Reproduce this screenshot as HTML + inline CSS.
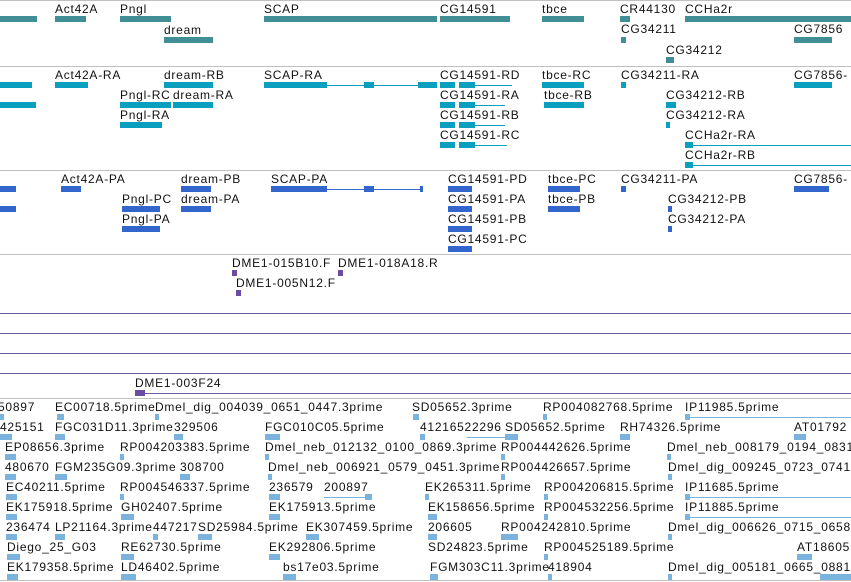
<!DOCTYPE html>
<html><head><meta charset="utf-8"><style>
body{margin:0;width:851px;height:582px;overflow:hidden;background:#fff;position:relative;font-family:"Liberation Sans",sans-serif}
.t{position:absolute;font-size:12px;line-height:14px;color:#111;white-space:nowrap;letter-spacing:0.75px}
.b{position:absolute;height:6px}
.l{position:absolute;height:1px}
.g{background:#418f94}.r{background:#0a9fbf}.p{background:#3366cc}.v{background:#6a4ca0}.c{background:#7ab3dd}
.h{position:absolute;left:0;width:851px;height:1px;background:#c0c0c0}
.pl{position:absolute;left:0;width:851px;height:1px;background:#6a5a9e}
</style></head><body>
<div class="h" style="top:0"></div>
<div class="h" style="top:66px"></div>
<div class="h" style="top:170px"></div>
<div class="h" style="top:254px"></div>
<div class="h" style="top:398px"></div>
<div class="h" style="top:580px"></div>
<div class="pl" style="top:313px"></div>
<div class="pl" style="top:333px"></div>
<div class="pl" style="top:353px"></div>
<div class="pl" style="top:373px"></div>

<!-- genes -->
<div class="b g" style="left:0;top:16px;width:37px"></div>
<div class="t" style="left:55px;top:2px">Act42A</div><div class="b g" style="left:55px;top:16px;width:31px"></div>
<div class="t" style="left:120px;top:2px">Pngl</div><div class="b g" style="left:120px;top:16px;width:51px"></div>
<div class="t" style="left:164px;top:23px">dream</div><div class="b g" style="left:164px;top:37px;width:49px"></div>
<div class="t" style="left:264px;top:2px">SCAP</div><div class="b g" style="left:264px;top:16px;width:173px"></div>
<div class="t" style="left:440px;top:2px">CG14591</div><div class="b g" style="left:440px;top:16px;width:70px"></div>
<div class="t" style="left:542px;top:2px">tbce</div><div class="b g" style="left:542px;top:16px;width:42px"></div>
<div class="t" style="left:620px;top:2px">CR44130</div><div class="b g" style="left:620px;top:16px;width:10px"></div>
<div class="t" style="left:685px;top:2px">CCHa2r</div><div class="b g" style="left:685px;top:16px;width:166px"></div>
<div class="t" style="left:621px;top:22px">CG34211</div><div class="b g" style="left:621px;top:37px;width:5px"></div>
<div class="t" style="left:794px;top:22px">CG7856</div><div class="b g" style="left:794px;top:37px;width:38px"></div>
<div class="t" style="left:666px;top:43px">CG34212</div><div class="b g" style="left:666px;top:57px;width:8px"></div>

<!-- transcripts -->
<div class="b r" style="left:0;top:82px;width:32px"></div>
<div class="b r" style="left:0;top:102px;width:36px"></div>
<div class="t" style="left:55px;top:68px">Act42A-RA</div><div class="b r" style="left:55px;top:82px;width:33px"></div>
<div class="t" style="left:164px;top:68px">dream-RB</div><div class="b r" style="left:164px;top:82px;width:49px"></div>
<div class="t" style="left:264px;top:68px">SCAP-RA</div><div class="b r" style="left:264px;top:82px;width:63px"></div><div class="l r" style="left:327px;top:85px;width:110px"></div><div class="b r" style="left:364px;top:82px;width:10px"></div><div class="b r" style="left:418px;top:82px;width:19px"></div>
<div class="t" style="left:120px;top:88px">Pngl-RC</div><div class="b r" style="left:120px;top:102px;width:51px"></div>
<div class="t" style="left:173px;top:88px">dream-RA</div><div class="b r" style="left:173px;top:102px;width:40px"></div>
<div class="t" style="left:120px;top:108px">Pngl-RA</div><div class="b r" style="left:120px;top:122px;width:42px"></div>
<div class="t" style="left:440px;top:68px">CG14591-RD</div><div class="b r" style="left:440px;top:82px;width:15px"></div><div class="b r" style="left:459px;top:82px;width:16px"></div><div class="l r" style="left:475px;top:85px;width:37px"></div>
<div class="t" style="left:440px;top:88px">CG14591-RA</div><div class="b r" style="left:440px;top:102px;width:15px"></div><div class="b r" style="left:459px;top:102px;width:16px"></div><div class="l r" style="left:475px;top:105px;width:30px"></div>
<div class="t" style="left:440px;top:108px">CG14591-RB</div><div class="b r" style="left:440px;top:122px;width:15px"></div><div class="b r" style="left:459px;top:122px;width:16px"></div><div class="l r" style="left:475px;top:125px;width:30px"></div>
<div class="t" style="left:440px;top:128px">CG14591-RC</div><div class="b r" style="left:440px;top:142px;width:15px"></div><div class="b r" style="left:459px;top:142px;width:16px"></div><div class="l r" style="left:475px;top:145px;width:32px"></div>
<div class="t" style="left:542px;top:68px">tbce-RC</div><div class="b r" style="left:542px;top:82px;width:42px"></div>
<div class="t" style="left:544px;top:88px">tbce-RB</div><div class="b r" style="left:544px;top:102px;width:40px"></div>
<div class="t" style="left:621px;top:68px">CG34211-RA</div><div class="b r" style="left:621px;top:82px;width:5px"></div>
<div class="t" style="left:794px;top:68px">CG7856-</div><div class="b r" style="left:794px;top:82px;width:38px"></div>
<div class="t" style="left:666px;top:88px">CG34212-RB</div><div class="b r" style="left:666px;top:102px;width:10px"></div>
<div class="t" style="left:666px;top:108px">CG34212-RA</div><div class="b r" style="left:666px;top:122px;width:4px"></div>
<div class="t" style="left:685px;top:128px">CCHa2r-RA</div><div class="b r" style="left:685px;top:142px;width:8px"></div><div class="l r" style="left:685px;top:145px;width:166px"></div>
<div class="t" style="left:685px;top:148px">CCHa2r-RB</div><div class="b r" style="left:685px;top:162px;width:8px"></div><div class="l r" style="left:685px;top:165px;width:166px"></div>

<!-- proteins -->
<div class="b p" style="left:0;top:186px;width:16px"></div>
<div class="b p" style="left:0;top:206px;width:16px"></div>
<div class="t" style="left:61px;top:172px">Act42A-PA</div><div class="b p" style="left:61px;top:186px;width:20px"></div>
<div class="t" style="left:181px;top:172px">dream-PB</div><div class="b p" style="left:181px;top:186px;width:30px"></div>
<div class="t" style="left:181px;top:192px">dream-PA</div><div class="b p" style="left:181px;top:206px;width:30px"></div>
<div class="t" style="left:122px;top:192px">Pngl-PC</div><div class="b p" style="left:122px;top:206px;width:38px"></div>
<div class="t" style="left:122px;top:212px">Pngl-PA</div><div class="b p" style="left:122px;top:226px;width:38px"></div>
<div class="t" style="left:271px;top:172px">SCAP-PA</div><div class="b p" style="left:271px;top:186px;width:56px"></div><div class="l p" style="left:327px;top:189px;width:96px"></div><div class="b p" style="left:364px;top:186px;width:10px"></div><div class="b p" style="left:420px;top:186px;width:3px"></div>
<div class="t" style="left:448px;top:172px">CG14591-PD</div><div class="b p" style="left:448px;top:186px;width:24px"></div>
<div class="t" style="left:448px;top:192px">CG14591-PA</div><div class="b p" style="left:448px;top:206px;width:24px"></div>
<div class="t" style="left:448px;top:212px">CG14591-PB</div><div class="b p" style="left:448px;top:226px;width:24px"></div>
<div class="t" style="left:448px;top:232px">CG14591-PC</div><div class="b p" style="left:448px;top:246px;width:24px"></div>
<div class="t" style="left:548px;top:172px">tbce-PC</div><div class="b p" style="left:548px;top:186px;width:32px"></div>
<div class="t" style="left:548px;top:192px">tbce-PB</div><div class="b p" style="left:548px;top:206px;width:32px"></div>
<div class="t" style="left:621px;top:172px">CG34211-PA</div><div class="b p" style="left:621px;top:186px;width:5px"></div>
<div class="t" style="left:794px;top:172px">CG7856-</div><div class="b p" style="left:794px;top:186px;width:35px"></div>
<div class="t" style="left:668px;top:192px">CG34212-PB</div><div class="b p" style="left:668px;top:206px;width:4px"></div>
<div class="t" style="left:668px;top:212px">CG34212-PA</div><div class="b p" style="left:668px;top:226px;width:4px"></div>

<!-- DME -->
<div class="t" style="left:232px;top:256px">DME1-015B10.F</div><div class="b v" style="left:232px;top:270px;width:5px"></div>
<div class="t" style="left:338px;top:256px">DME1-018A18.R</div><div class="b v" style="left:338px;top:270px;width:5px"></div>
<div class="t" style="left:236px;top:276px">DME1-005N12.F</div><div class="b v" style="left:236px;top:290px;width:5px"></div>
<div class="t" style="left:135px;top:376px">DME1-003F24</div><div class="b v" style="left:135px;top:390px;width:10px"></div><div class="pl" style="left:145px;top:393px;width:706px"></div>

<!-- bottom rows -->
<div class="t" style="left:-2px;top:400px">50897</div><div class="t" style="left:55px;top:400px">EC00718.5prime</div><div class="t" style="left:155px;top:400px">Dmel_dig_004039_0651_0447.3prime</div><div class="t" style="left:412px;top:400px">SD05652.3prime</div><div class="t" style="left:543px;top:400px">RP004082768.5prime</div><div class="t" style="left:685px;top:400px">IP11985.5prime</div>
<div class="b c" style="left:0;top:414px;width:4px"></div><div class="b c" style="left:57px;top:414px;width:7px"></div><div class="b c" style="left:155px;top:414px;width:4px"></div><div class="b c" style="left:413px;top:414px;width:6px"></div><div class="b c" style="left:543px;top:414px;width:4px"></div><div class="b c" style="left:685px;top:414px;width:5px"></div><div class="l c" style="left:685px;top:417px;width:166px"></div>

<div class="t" style="left:0;top:420px">425151</div><div class="t" style="left:55px;top:420px">FGC031D11.3prime</div><div class="t" style="left:174px;top:420px">329506</div><div class="t" style="left:265px;top:420px">FGC010C05.5prime</div><div class="t" style="left:420px;top:420px">41216522296</div><div class="t" style="left:505px;top:420px">SD05652.5prime</div><div class="t" style="left:620px;top:420px">RH74326.5prime</div><div class="t" style="left:794px;top:420px">AT01792</div>
<div class="b c" style="left:0;top:434px;width:12px"></div><div class="b c" style="left:55px;top:434px;width:10px"></div><div class="b c" style="left:174px;top:434px;width:9px"></div><div class="b c" style="left:265px;top:434px;width:15px"></div><div class="b c" style="left:420px;top:434px;width:5px"></div><div class="l c" style="left:467px;top:437px;width:38px"></div><div class="b c" style="left:505px;top:434px;width:13px"></div><div class="b c" style="left:620px;top:434px;width:10px"></div><div class="b c" style="left:794px;top:434px;width:12px"></div>

<div class="t" style="left:5px;top:440px">EP08656.3prime</div><div class="t" style="left:120px;top:440px">RP004203383.5prime</div><div class="t" style="left:265px;top:440px">Dmel_neb_012132_0100_0869.3prime</div><div class="t" style="left:501px;top:440px">RP004442626.5prime</div><div class="t" style="left:667px;top:440px">Dmel_neb_008179_0194_0831</div>
<div class="b c" style="left:5px;top:454px;width:11px"></div><div class="b c" style="left:120px;top:454px;width:4px"></div><div class="b c" style="left:265px;top:454px;width:4px"></div><div class="b c" style="left:501px;top:454px;width:4px"></div><div class="b c" style="left:667px;top:454px;width:4px"></div>

<div class="t" style="left:5px;top:460px">480670</div><div class="t" style="left:55px;top:460px">FGM235G09.3prime</div><div class="t" style="left:180px;top:460px">308700</div><div class="t" style="left:268px;top:460px">Dmel_neb_006921_0579_0451.3prime</div><div class="t" style="left:501px;top:460px">RP004426657.5prime</div><div class="t" style="left:668px;top:460px">Dmel_dig_009245_0723_0741</div>
<div class="b c" style="left:5px;top:474px;width:11px"></div><div class="b c" style="left:55px;top:474px;width:12px"></div><div class="b c" style="left:180px;top:474px;width:10px"></div><div class="b c" style="left:268px;top:474px;width:4px"></div><div class="b c" style="left:501px;top:474px;width:4px"></div><div class="b c" style="left:668px;top:474px;width:4px"></div>

<div class="t" style="left:6px;top:480px">EC40211.5prime</div><div class="t" style="left:120px;top:480px">RP004546337.5prime</div><div class="t" style="left:269px;top:480px">236579</div><div class="t" style="left:324px;top:480px">200897</div><div class="t" style="left:425px;top:480px">EK265311.5prime</div><div class="t" style="left:544px;top:480px">RP004206815.5prime</div><div class="t" style="left:685px;top:480px">IP11685.5prime</div>
<div class="b c" style="left:6px;top:494px;width:11px"></div><div class="b c" style="left:120px;top:494px;width:4px"></div><div class="b c" style="left:269px;top:494px;width:11px"></div><div class="l c" style="left:324px;top:497px;width:48px"></div><div class="b c" style="left:365px;top:494px;width:7px"></div><div class="b c" style="left:425px;top:494px;width:4px"></div><div class="b c" style="left:544px;top:494px;width:4px"></div><div class="b c" style="left:685px;top:494px;width:5px"></div><div class="l c" style="left:685px;top:497px;width:166px"></div>

<div class="t" style="left:6px;top:500px">EK175918.5prime</div><div class="t" style="left:121px;top:500px">GH02407.5prime</div><div class="t" style="left:269px;top:500px">EK175913.5prime</div><div class="t" style="left:428px;top:500px">EK158656.5prime</div><div class="t" style="left:544px;top:500px">RP004532256.5prime</div><div class="t" style="left:685px;top:500px">IP11885.5prime</div>
<div class="b c" style="left:6px;top:514px;width:11px"></div><div class="b c" style="left:121px;top:514px;width:13px"></div><div class="b c" style="left:269px;top:514px;width:11px"></div><div class="b c" style="left:428px;top:514px;width:9px"></div><div class="b c" style="left:544px;top:514px;width:4px"></div><div class="b c" style="left:685px;top:514px;width:5px"></div><div class="l c" style="left:685px;top:517px;width:166px"></div>

<div class="t" style="left:6px;top:520px">236474</div><div class="t" style="left:55px;top:520px">LP21164.3prime</div><div class="t" style="left:153px;top:520px">447217</div><div class="t" style="left:198px;top:520px">SD25984.5prime</div><div class="t" style="left:306px;top:520px">EK307459.5prime</div><div class="t" style="left:428px;top:520px">206605</div><div class="t" style="left:501px;top:520px">RP004242810.5prime</div><div class="t" style="left:668px;top:520px">Dmel_dig_006626_0715_0658</div>
<div class="b c" style="left:6px;top:534px;width:11px"></div><div class="b c" style="left:55px;top:534px;width:10px"></div><div class="b c" style="left:153px;top:534px;width:5px"></div><div class="b c" style="left:198px;top:534px;width:14px"></div><div class="b c" style="left:306px;top:534px;width:13px"></div><div class="b c" style="left:428px;top:534px;width:9px"></div><div class="b c" style="left:501px;top:534px;width:17px"></div><div class="b c" style="left:668px;top:534px;width:4px"></div>

<div class="t" style="left:7px;top:540px">Diego_25_G03</div><div class="t" style="left:121px;top:540px">RE62730.5prime</div><div class="t" style="left:269px;top:540px">EK292806.5prime</div><div class="t" style="left:428px;top:540px">SD24823.5prime</div><div class="t" style="left:544px;top:540px">RP004525189.5prime</div><div class="t" style="left:797px;top:540px">AT18605</div>
<div class="b c" style="left:7px;top:554px;width:13px"></div><div class="b c" style="left:121px;top:554px;width:13px"></div><div class="b c" style="left:269px;top:554px;width:11px"></div><div class="b c" style="left:544px;top:554px;width:4px"></div><div class="b c" style="left:797px;top:554px;width:15px"></div>

<div class="t" style="left:7px;top:560px">EK179358.5prime</div><div class="t" style="left:121px;top:560px">LD46402.5prime</div><div class="t" style="left:283px;top:560px">bs17e03.5prime</div><div class="t" style="left:430px;top:560px">FGM303C11.3prime</div><div class="t" style="left:548px;top:560px">418904</div><div class="t" style="left:668px;top:560px">Dmel_dig_005181_0665_0881</div>
<div class="b c" style="left:7px;top:574px;width:11px"></div><div class="b c" style="left:121px;top:574px;width:15px"></div><div class="b c" style="left:283px;top:574px;width:13px"></div><div class="b c" style="left:430px;top:574px;width:8px"></div><div class="b c" style="left:548px;top:574px;width:4px"></div><div class="b c" style="left:668px;top:574px;width:4px"></div><div class="b c" style="left:820px;top:574px;width:31px"></div>
</body></html>
